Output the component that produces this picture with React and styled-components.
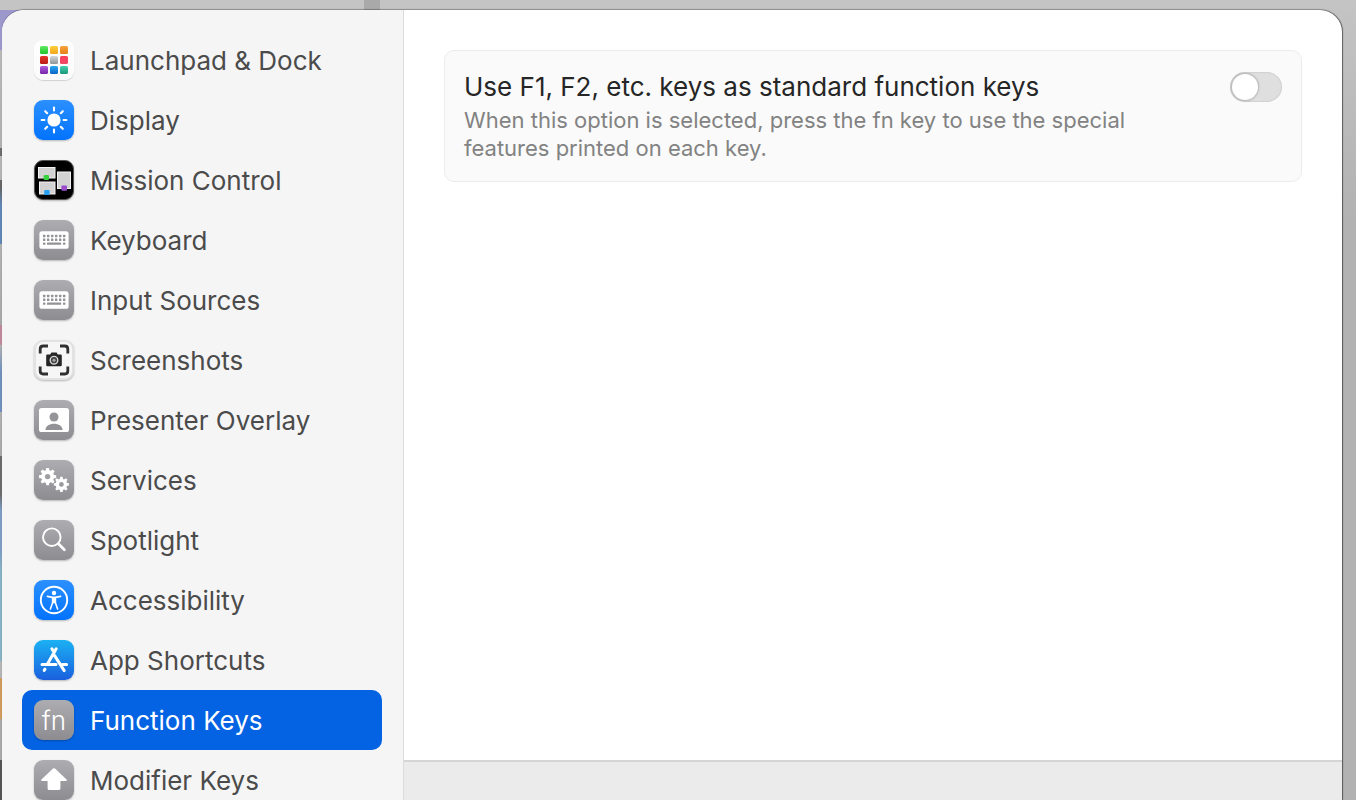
import React, {useState} from 'react'
import styled, {createGlobalStyle, css} from 'styled-components'

const GlobalStyle = createGlobalStyle`
  *{
    box-sizing: border-box;
  }

  body{
    margin: 0;
    font-family: Inter, "Liberation Sans", sans-serif;
    font-size: 26px;
    color: #262626;
  }
`

const Backdrop = styled.div`
  height: 100vh;
  padding: 10px 14px 0 2px;
  overflow: hidden;
  background:
    linear-gradient(90deg, #c4c4c4 364px, #a9a9a9 364px, #a9a9a9 380px, #c4c4c4 380px) 0 0 / 100% 10px no-repeat,
    linear-gradient(
      #c2c2c2 10px, #9c98cb 10px, #9c98cb 50px, #b8b8b8 50px, #b0b0b0 148px,
      #6c6c6c 148px, #6c6c6c 156px, #b4b4b4 156px, #b4b4b4 180px, #666 180px,
      #666 188px, #5f86b5 204px, #5f86b5 244px, #b0b0b0 244px, #a8a8a8 325px,
      #c0889c 325px, #c0889c 345px, #b0b0b0 345px, #6f90bd 372px, #6f90bd 412px,
      #b0b0b0 412px, #a8a8a8 456px, #6b6b6b 456px, #6b6b6b 494px, #7d9cc4 510px,
      #7d9cc4 550px, #86b2c4 570px, #86b2c4 660px, #b4b4b4 662px, #b4b4b4 678px,
      #cf9a5c 678px, #cf9a5c 718px, #a8a8a8 720px, #a8a8a8 760px, #555 760px
    ) 0 0 / 22px 100% no-repeat,
    linear-gradient(#c4c4c4, #b2b2b2 220px);
`

const Dialog = styled.div`
  display: grid;
  grid-template-columns: 402px 1fr;
  height: 100%;
  overflow: hidden;
  background: white;
  border-radius: 22px 22px 0 0;
  box-shadow: 1px 0 1px rgba(0,0,0,0.5), 0 -1px 1px rgba(0,0,0,0.25);
`

const Sidebar = styled.nav`
  min-height: 0;
  padding: 20px 21px 0 20px;
  overflow-y: auto;
  scrollbar-width: none;
  background: #f5f5f6;
  border-right: 1px solid #dcdcdc;
`

const Row = styled.button`
  display: flex;
  align-items: center;
  gap: 16px;
  width: 100%;
  height: 60px;
  padding: 0 12px;
  border: 0;
  border-radius: 10px;
  background: ${props => props.$active ? '#0463e3' : 'transparent'};
  color: ${props => props.$active ? 'white' : '#4b4b4b'};
  font: inherit;
  text-align: left;
  cursor: pointer;
`

const tones = {
  gray: css`background: linear-gradient(#adadb1, #8c8c91);`,
  blue: css`background: linear-gradient(#2b90ff, #0373fd);`,
  store: css`background: linear-gradient(#1bb1f3, #1a60de);`,
  white: css`
    background: linear-gradient(#fff, #fafafa);
    box-shadow: 0 1px 1px rgba(0,0,0,0.15);
  `,
  shot: css`
    background: #f6f6f6;
    border: 2px solid #e2e2e2;
  `,
  black: css`
    background: black;
    border: 1px solid #555;
  `
}

const Tile = styled.span`
  display: flex;
  flex: none;
  align-items: center;
  justify-content: center;
  width: 40px;
  height: 40px;
  overflow: hidden;
  border-radius: 9px;
  box-shadow: 0 1px 2px rgba(0,0,0,0.25);
  color: white;
  font-weight: 300;
  ${props => tones[props.$tone]}

  svg{
    flex: none;
    width: 40px;
    height: 40px;
  }
`

const Content = styled.div`
  display: flex;
  flex-direction: column;
  min-width: 0;
`

const Pane = styled.main`
  flex: 1;
  padding: 40px;
`

const Footer = styled.footer`
  height: 40px;
  background: #ebebeb;
  border-top: 2px solid #d5d5d5;
`

const Setting = styled.section`
  display: flex;
  justify-content: space-between;
  gap: 40px;
  padding: 19px;
  background: #fafafa;
  border: 1px solid #ececec;
  border-radius: 10px;
`

const SettingText = styled.div`
  max-width: 700px;
`

const Title = styled.label`
  display: block;
  line-height: 34px;
`

const Description = styled.p`
  margin: 2px 0 0;
  color: #828282;
  font-size: 22px;
  line-height: 28px;
`

const Switch = styled.input`
  display: flex;
  flex: none;
  align-items: center;
  width: 52px;
  height: 30px;
  margin: 2px 0 0;
  padding: 2px;
  appearance: none;
  border-radius: 15px;
  background: #dfdfdf;
  box-shadow: inset 0 0 2px rgba(0,0,0,0.2);
  cursor: pointer;

  &::before{
    content: '';
    width: 26px;
    height: 26px;
    border-radius: 100%;
    background: white;
    box-shadow: 0 0 2px 1px rgba(0,0,0,0.2);
  }

  &:checked{
    justify-content: flex-end;
    background: #0463e3;
  }
`

const Svg = ({children}) => (
  <svg viewBox="0 0 40 40" fill="none" aria-hidden="true">{children}</svg>
)

const launchpadColors = [
  ['#62ea62', '#1fc42c'], ['#ffd03c', '#f2a51c'], ['#f9a53a', '#e57e1a'],
  ['#e8362c', '#b81c18'], ['#d4d8da', '#8e9498'], ['#ff3d5c', '#ee4a66'],
  ['#b15be0', '#7626a8'], ['#27a9f2', '#0b62c8'], ['#45d0b0', '#189878']
]

const LaunchpadIcon = () => (
  <Svg>
    {launchpadColors.map(([from, to], i) => (
      <React.Fragment key={from}>
        <linearGradient id={`pad${i}`} x1="0" y1="0" x2="0" y2="1">
          <stop stopColor={from}/>
          <stop offset="1" stopColor={to}/>
        </linearGradient>
        <rect
          x={6 + (i % 3) * 10}
          y={6 + Math.floor(i / 3) * 10}
          width="8"
          height="8"
          rx="1.6"
          fill={`url(#pad${i})`}
        />
      </React.Fragment>
    ))}
  </Svg>
)

const DisplayIcon = () => (
  <Svg>
    <circle cx="20" cy="20" r="6.6" fill="white"/>
    {[0, 45, 90, 135, 180, 225, 270, 315].map(angle => (
      <path
        key={angle}
        d="M20 7.6v2.8"
        stroke="white"
        strokeWidth="2.1"
        strokeLinecap="round"
        transform={`rotate(${angle} 20 20)`}
      />
    ))}
  </Svg>
)

const MissionIcon = () => (
  <Svg>
    <rect x="4.5" y="7.5" width="16.5" height="10.5" fill="#d2d2d2" stroke="#f2f2f2"/>
    <rect x="5.5" y="22" width="15.5" height="12" fill="#d2d2d2" stroke="#f2f2f2"/>
    <rect x="23.5" y="12" width="13" height="16.5" fill="#d2d2d2" stroke="#f2f2f2"/>
    <rect x="9.6" y="15" width="5.4" height="5" rx="1" fill="#38d13e"/>
    <rect x="10.2" y="30" width="5.4" height="5" rx="1" fill="#259ff0"/>
    <rect x="27.4" y="25.4" width="5.6" height="5.4" rx="1" fill="#9a4ccb"/>
  </Svg>
)

const KeyboardIcon = () => (
  <Svg>
    <rect x="5.4" y="11.2" width="29.2" height="17.6" rx="2.6" fill="white"/>
    {[14.8, 18.6].map(y => (
      [9, 13, 17, 21, 25, 29].map(x => (
        <rect key={`${x}-${y}`} x={x} y={y} width="2.4" height="2.4" rx=".5" fill="#929297"/>
      ))
    ))}
    <rect x="9" y="22.6" width="2.4" height="2.2" rx=".5" fill="#929297"/>
    <rect x="13" y="22.6" width="14.2" height="2.2" rx=".5" fill="#929297"/>
    <rect x="29" y="22.6" width="2.4" height="2.2" rx=".5" fill="#929297"/>
  </Svg>
)

const ScreenshotIcon = () => (
  <Svg>
    <path
      d="M6.2 13.6V9Q6.2 6 9.2 6H14M26 6h4.800Q33.800 6 33.800 9V13.600M33.800 26.400v4.600Q33.800 34 30.800 34H26M14 34H9.200Q6.200 34 6.200 31V26.400"
      stroke="#303030"
      strokeWidth="2.8"
    />
    <path
      d="M13.4 14.400h2.800l1.200-2h5.200l1.200 2h2.800q1.200 0 1.200 1.200v9.400q0 1.200-1.200 1.200H13.400q-1.200 0-1.200-1.200v-9.400q0-1.200 1.200-1.200z"
      fill="#262626"
    />
    <circle cx="20" cy="20.2" r="3.8" fill="#444" stroke="#d4d4d4" strokeWidth="1.4"/>
    <circle cx="20" cy="20.2" r="1.5" fill="#aaa"/>
  </Svg>
)

const PresenterIcon = () => (
  <Svg>
    <rect x="5" y="8" width="30" height="24" rx="2.6" fill="white"/>
    <circle cx="20" cy="17" r="4.5" fill="#949499"/>
    <path d="M11.4 30c.3-4 4-6.2 8.6-6.2s8.3 2.2 8.6 6.2z" fill="#929297"/>
  </Svg>
)

const Gear = ({x, y, size}) => (
  <g transform={`translate(${x} ${y}) scale(${size})`}>
    <circle r="4.6" stroke="white" strokeWidth="3.8"/>
    {[0, 45, 90, 135, 180, 225, 270, 315].map(angle => (
      <path key={angle} d="M-1.9-5.5L-1.3-8.6H1.3L1.900-5.500z" fill="white" transform={`rotate(${angle})`}/>
    ))}
  </g>
)

const ServicesIcon = () => (
  <Svg>
    <Gear x={13.6} y={16.6} size={1}/>
    <Gear x={27.4} y={24.4} size={0.88}/>
  </Svg>
)

const SpotlightIcon = () => (
  <Svg>
    <circle cx="17.8" cy="17.2" r="8.8" stroke="white" strokeWidth="1.9"/>
    <path d="M24.4 23.8l6 6" stroke="white" strokeWidth="2.7" strokeLinecap="round"/>
  </Svg>
)

const AccessibilityIcon = () => (
  <Svg>
    <circle cx="20" cy="20" r="13.2" stroke="white" strokeWidth="1.9"/>
    <circle cx="20" cy="13" r="2.2" fill="white"/>
    <path
      d="M13.4 16.400l5 1h3.200l5-1M18.600 17.400v5.400L16.400 29M21.400 17.400v5.400L23.600 29"
      stroke="white"
      strokeWidth="1.6"
      strokeLinecap="round"
      strokeLinejoin="round"
    />
    <path d="M18.2 17h3.6v6.2h-3.6z" fill="white"/>
  </Svg>
)

const StoreIcon = () => (
  <Svg>
    <path
      d="M22.2 8.800L13.200 24.400M17.900 8.800l2.200 3.800M20.600 15.600l9.600 15M8 24.600h14M28.200 24.600H32.600M11 29.200l-.8 1.200"
      stroke="white"
      strokeWidth="3"
      strokeLinecap="round"
    />
  </Svg>
)

const ShiftIcon = () => (
  <Svg>
    <path
      d="M19 8.600q1-.9 2 0L32.600 19.400q.9 1.400-.8 1.600H26.400v7.400q0 1.600-1.600 1.600h-9.600q-1.600 0-1.600-1.600V21H8.200q-1.700-.2-.8-1.600z"
      fill="white"
    />
  </Svg>
)

const items = [
  {name: 'Launchpad & Dock', tone: 'white', icon: <LaunchpadIcon/>},
  {name: 'Display', tone: 'blue', icon: <DisplayIcon/>},
  {name: 'Mission Control', tone: 'black', icon: <MissionIcon/>},
  {name: 'Keyboard', tone: 'gray', icon: <KeyboardIcon/>},
  {name: 'Input Sources', tone: 'gray', icon: <KeyboardIcon/>},
  {name: 'Screenshots', tone: 'shot', icon: <ScreenshotIcon/>},
  {name: 'Presenter Overlay', tone: 'gray', icon: <PresenterIcon/>},
  {name: 'Services', tone: 'gray', icon: <ServicesIcon/>},
  {name: 'Spotlight', tone: 'gray', icon: <SpotlightIcon/>},
  {name: 'Accessibility', tone: 'blue', icon: <AccessibilityIcon/>},
  {name: 'App Shortcuts', tone: 'store', icon: <StoreIcon/>},
  {name: 'Function Keys', tone: 'gray', icon: 'fn'},
  {name: 'Modifier Keys', tone: 'gray', icon: <ShiftIcon/>}
]

const App = () => {
  const [active, setActive] = useState('Function Keys')
  const [standard, setStandard] = useState(false)

  return (
    <Backdrop>
      <GlobalStyle/>
      <Dialog>
        <Sidebar>
          {items.map(({name, tone, icon}) => (
            <Row key={name} $active={name === active} onClick={()=>setActive(name)}>
              <Tile $tone={tone}>{icon}</Tile>
              {name}
            </Row>
          ))}
        </Sidebar>
        <Content>
          <Pane>
            <Setting>
              <SettingText>
                <Title htmlFor="standard-keys">Use F1, F2, etc. keys as standard function keys</Title>
                <Description>
                  When this option is selected, press the fn key to use the special features printed on each key.
                </Description>
              </SettingText>
              <Switch
                id="standard-keys"
                type="checkbox"
                role="switch"
                checked={standard}
                onChange={()=>setStandard(!standard)}
              />
            </Setting>
          </Pane>
          <Footer/>
        </Content>
      </Dialog>
    </Backdrop>
  )
}

export default App
